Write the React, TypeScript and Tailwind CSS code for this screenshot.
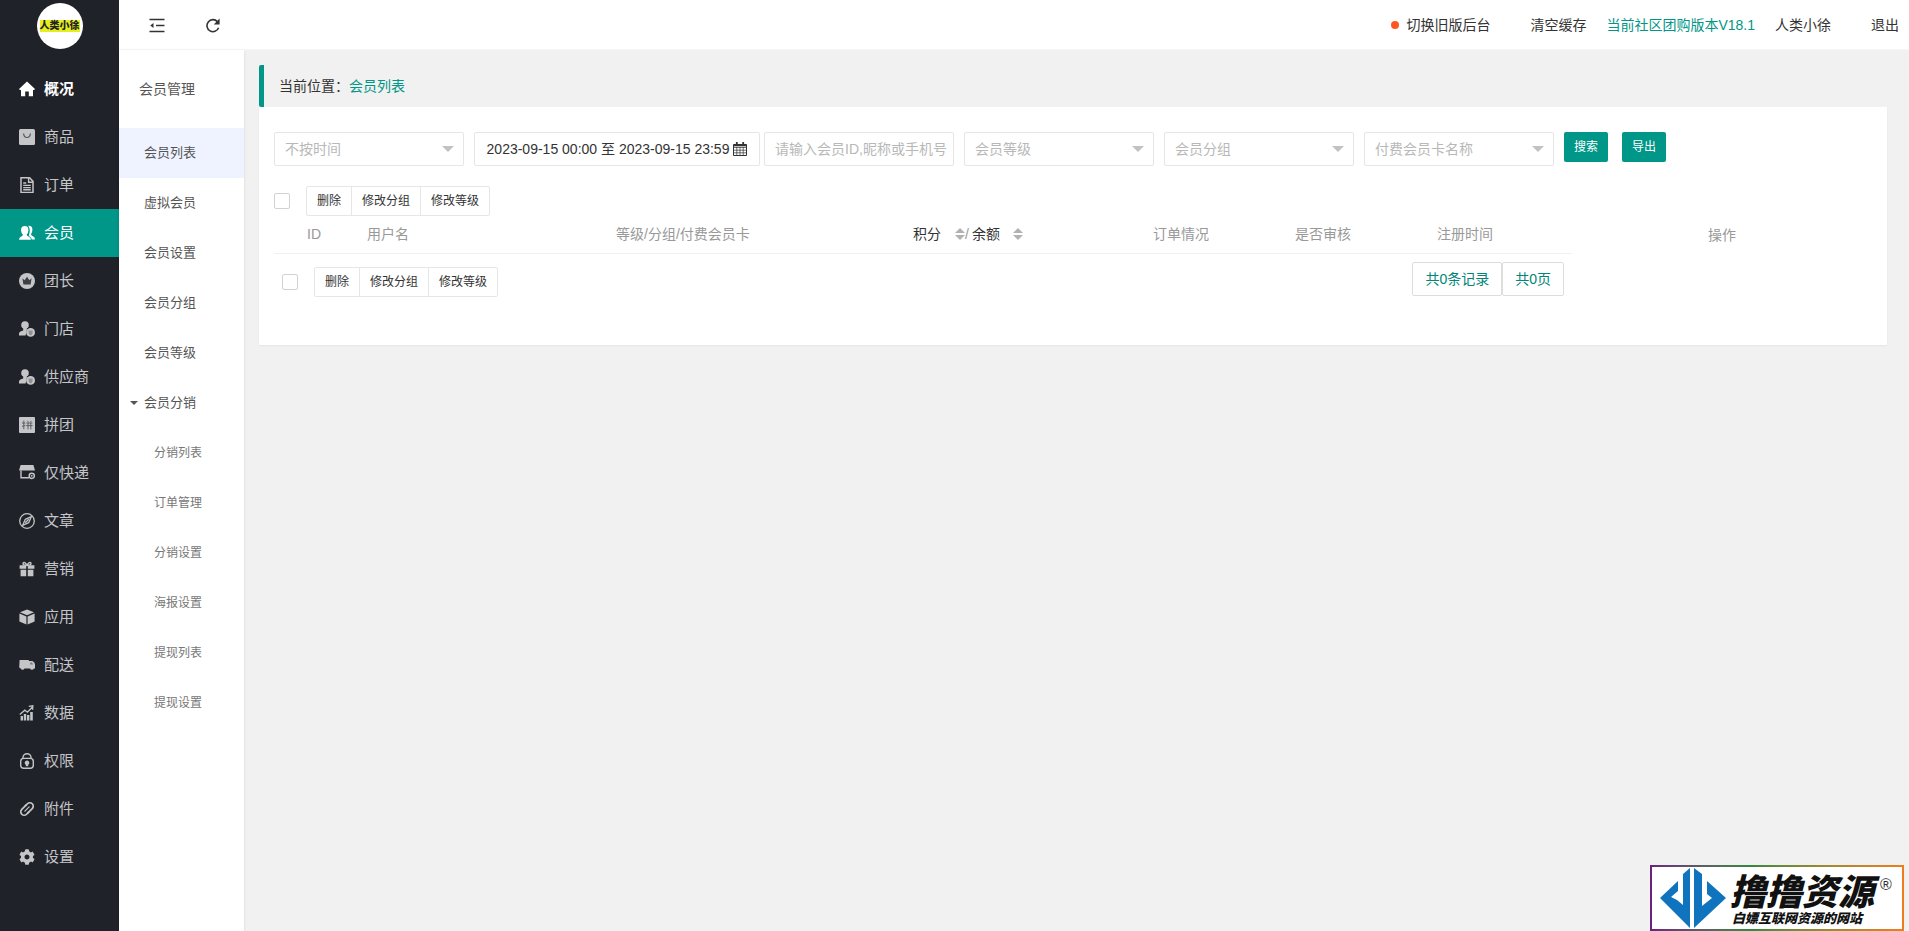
import type { ReactNode } from "react";
import { FaCog } from "react-icons/fa";

const FONT = "font-['Liberation_Sans','Noto_Sans_CJK_SC',sans-serif]";

function Icon({ children }: { children: ReactNode }) {
  return (
    <svg viewBox="0 0 16 16" className="size-4" fill="currentColor" aria-hidden="true">
      {children}
    </svg>
  );
}

const PersonBadge = () => (
  <Icon>
    <circle cx="6" cy="4" r="3.8" />
    <path d="M4.2 7h3.6v2.2L6.6 14.6H0V12.4Q.3 10.4 4.2 9.4z" />
    <circle cx="11.6" cy="11.4" r="4.4" />
    <path d="M9.6 9.4h4v2.6q-.2 1.6-2 2.4q-1.8-.8-2-2.4z" fill="#8f9194" />
  </Icon>
);

const NAV_ITEMS = [
  {
    label: "概况",
    icon: (
      <Icon>
        <path d="M8 .6L16 8l-.8 1H14v6.2H9.8v-4.6H6.2v4.6H2V9H.8L0 8z" />
      </Icon>
    ),
  },
  {
    label: "商品",
    icon: (
      <Icon>
        <rect width="16" height="16" rx="1.5" />
        <path d="M4.6 4.5q.3 4 3.4 4t3.4-4" fill="none" stroke="#55585d" strokeWidth="1.2" />
      </Icon>
    ),
  },
  {
    label: "订单",
    icon: (
      <Icon>
        <path d="M2 .8h8.6L14 4.4v11H2z" fill="none" stroke="currentColor" strokeWidth="1.5" />
        <path d="M9.6.8v4.4H14M4.2 6h3M4.2 8.4h7.6M4.2 10.6h7.6M4.2 12.8h7.6" fill="none" stroke="currentColor" strokeWidth="1.4" />
      </Icon>
    ),
  },
  {
    label: "会员",
    icon: (
      <Icon>
        <path d="M9.2.8Q13.6.6 13.4 5q-.2 2.6-1.4 4.2.2 1.4 2 2 2 .8 2 3.2h-3.2q-.4-2.4-2.8-3.4V9.6Q12 5 9.2.8z" />
        <path d="M5.8 1Q9.6 1 9.4 5.4 9.2 8 7.8 9.4q-.2 1.6 1.8 2.2 2.4 1 2.4 3.2H0q0-2.4 2.2-3.2 2-.6 1.6-2.2Q2.2 8 2 5.4 2 1 5.8 1z" />
      </Icon>
    ),
  },
  {
    label: "团长",
    icon: (
      <Icon>
        <circle cx="8" cy="8" r="8" />
        <path d="M3.4 5.2l2.2 2L8 3.8l2.4 3.4 2.2-2-1 6.4H4.4z" fill="#3c3f45" />
      </Icon>
    ),
  },
  { label: "门店", icon: <PersonBadge /> },
  { label: "供应商", icon: <PersonBadge /> },
  {
    label: "拼团",
    icon: (
      <Icon>
        <rect width="16" height="16" rx="1" />
        <path d="M3 6h3.4M3 9.4l3.4-1M4.8 3.6v8.6M7.4 6h6M7.2 8.6h6.4M9 6v6.4M11.8 6v6.4M8.6 3.8l.8 1.6M12.2 3.8l-.8 1.6" fill="none" stroke="#55585d" strokeWidth=".9" />
      </Icon>
    ),
  },
  {
    label: "仅快递",
    icon: (
      <Icon>
        <path d="M1.6 0h12.8L16 5.4H0z" />
        <path d="M2 5.4v7.4h8" fill="none" stroke="currentColor" strokeWidth="1.4" />
        <circle cx="12.8" cy="10.8" r="2.6" fill="#20222A" stroke="currentColor" strokeWidth="1.5" />
        <circle cx="12.8" cy="10.8" r=".9" />
      </Icon>
    ),
  },
  {
    label: "文章",
    icon: (
      <Icon>
        <g fill="none" stroke="currentColor">
          <circle cx="8" cy="8" r="7.3" strokeWidth="1.3" />
          <path d="M12.4 3.6L9.8 9.6 3.6 12.4 6.2 6.4zM6.2 9.8l3.6-3.6" strokeWidth="1.3" strokeLinejoin="round" />
        </g>
      </Icon>
    ),
  },
  {
    label: "营销",
    icon: (
      <Icon>
        <path d="M.6 4.2h6.6v3.6H.6zM8.8 4.2h6.6v3.6H8.8zM1.6 8.8h5.6v6.4H1.6zM8.8 8.8h5.6v6.4H8.8z" />
        <path d="M8 4.2Q3.6 4.4 4 2.2 5.4.2 8 4.2 10.6.2 12 2.2 12.4 4.4 8 4.2z" fill="none" stroke="currentColor" strokeWidth="1.4" />
      </Icon>
    ),
  },
  {
    label: "应用",
    icon: (
      <Icon>
        <path d="M8 .4l7 2.8L8 6.2 1 3.2zM.4 4.4L7.4 7.4v8.2L.4 12.4zM15.6 4.4L8.6 7.4v8.2l7-3.2z" />
      </Icon>
    ),
  },
  {
    label: "配送",
    icon: (
      <Icon>
        <path d="M.6 3h9.2v1h3.6Q16 5.4 16 7.4v4h-1.2a1.9 1.9 0 0 1-3.7 0H5.4a1.9 1.9 0 0 1-3.7 0L.2 10.6z" />
        <path d="M11.2 5.4h1.8l1.2 2h-3z" fill="#777a7f" />
      </Icon>
    ),
  },
  {
    label: "数据",
    icon: (
      <Icon>
        <path d="M1.6 11h2.4v4.6H1.6zM4.8 9h2.4v6.6H4.8zM8 10h2.4v5.6H8zM11.2 7h2.6v8.6h-2.6z" />
        <path d="M.8 9.4l5-4.2 2.6 2 4.8-5M9.8 1.4l4-.6-.2 4" fill="none" stroke="currentColor" strokeWidth="1.3" />
      </Icon>
    ),
  },
  {
    label: "权限",
    icon: (
      <Icon>
        <rect x="1.7" y="5.4" width="12.6" height="9.8" rx="3" fill="none" stroke="currentColor" strokeWidth="1.4" />
        <path d="M4 5.6V4.4a4 3.7 0 0 1 8 0v1.2" fill="none" stroke="currentColor" strokeWidth="1.4" />
        <path d="M8 7.6a2.2 2.2 0 0 1 1.2 4.1v1.5H6.8v-1.5A2.2 2.2 0 0 1 8 7.6z" />
      </Icon>
    ),
  },
  {
    label: "附件",
    icon: (
      <Icon>
        <g transform="rotate(-45 8 8)" fill="none" stroke="currentColor" strokeWidth="1.7" strokeLinecap="round">
          <path d="M10.5 4.6H4a3.4 3.4 0 0 0 0 6.8h3" />
          <path d="M5.5 11.4H12a3.4 3.4 0 0 0 0-6.8H9" />
          <path d="M5 8h6" strokeWidth="1.3" />
        </g>
      </Icon>
    ),
  },
  { label: "设置", icon: <FaCog className="size-4" /> },
];

const SUB_ITEMS = ["会员列表", "虚拟会员", "会员设置", "会员分组", "会员等级"];
const DIST_ITEMS = ["分销列表", "订单管理", "分销设置", "海报设置", "提现列表", "提现设置"];

function navClass(label: string) {
  if (label === "概况") return "font-bold text-white";
  if (label === "会员") return "bg-[#009688] text-white";
  return "text-[#c4c5c7] hover:text-white";
}

function FilterSelect({ label }: { label: string }) {
  return (
    <div className="relative w-[190px]">
      <select
        aria-label={label}
        className="h-[34px] w-full appearance-none rounded-xs border border-[#e6e6e6] bg-white px-2.5 text-sm text-[#b8b8b8] outline-none"
      >
        <option>{label}</option>
      </select>
      <span className="pointer-events-none absolute top-3.5 right-2.5 border-x-6 border-t-6 border-x-transparent border-t-[#c2c2c2]" />
    </div>
  );
}

function BulkActions({ name }: { name: string }) {
  return (
    <div className="flex items-center gap-4">
      <input
        type="checkbox"
        aria-label={name}
        className="size-4 appearance-none rounded-xs border border-[#d2d2d2] bg-white checked:bg-[#009688]"
      />
      <div className="flex rounded-xs border border-[#e6e6e6] text-xs text-[#333]">
        <button className="h-7 px-2.5">删除</button>
        <button className="h-7 border-l border-[#e6e6e6] px-2.5">修改分组</button>
        <button className="h-7 border-l border-[#e6e6e6] px-2.5">修改等级</button>
      </div>
    </div>
  );
}

function SortArrows() {
  return (
    <span className="flex flex-col gap-0.5">
      <span className="border-x-5 border-b-5 border-x-transparent border-b-[#b2b2b2]" />
      <span className="border-x-5 border-t-5 border-x-transparent border-t-[#b2b2b2]" />
    </span>
  );
}

export default function App() {
  return (
    <div className={`flex min-h-screen w-full bg-[#f1f1f1] text-sm text-[#333] ${FONT}`}>

      {/* main menu */}
      <aside className="flex w-[119px] shrink-0 flex-col bg-[#20222A]">
        <div className="flex h-[65px] justify-center pt-[3px]">
          <div className="flex size-[46px] items-center justify-center rounded-full bg-white">
            <span className="bg-[#e6ef1e] text-[10px] leading-3 font-black text-[#222]">人类小徐</span>
          </div>
        </div>
        <nav className="flex flex-col">
          {NAV_ITEMS.map(({ label, icon }) => (
            <a
              key={label}
              href="#"
              className={`flex h-12 items-center gap-[9px] pl-[19px] text-[15px] ${navClass(label)}`}
            >
              {icon}
              {label}
            </a>
          ))}
        </nav>
      </aside>

      <div className="flex min-w-0 flex-1 flex-col">

        {/* top bar */}
        <header className="flex h-[50px] items-center justify-between border-b border-[#f6f6f6] bg-white pr-2.5 pl-[30px]">
          <div className="flex items-center gap-10">
            <button aria-label="收起菜单">
              <svg viewBox="0 0 16 16" className="size-4" fill="none" stroke="#333" strokeWidth="1.5">
                <path d="M.5 2.5h15M7 8.5h8.5M.5 14.5h15" />
                <path d="M4.5 6v5L1.2 8.5z" fill="#333" stroke="none" />
              </svg>
            </button>
            <button aria-label="刷新">
              <svg viewBox="0 0 16 16" className="size-4" fill="none" stroke="#333" strokeWidth="1.6">
                <path d="M13.6 10.8A6 6 0 1 1 12.4 4.6" />
                <path d="M14.6 1.4v6H8.8z" fill="#333" stroke="none" />
              </svg>
            </button>
          </div>
          <div className="flex items-center">
            <a href="#" className="flex items-center gap-[7px]">
              <span className="size-2 rounded-full bg-[#ff5722]" />
              切换旧版后台
            </a>
            <a href="#" className="ml-10">清空缓存</a>
            <span className="ml-5 text-[#009688]">当前社区团购版本V18.1</span>
            <a href="#" className="ml-5">人类小徐</a>
            <a href="#" className="ml-10">退出</a>
          </div>
        </header>

        <div className="flex flex-1">

          {/* sub menu */}
          <aside className="w-[125px] shrink-0 bg-white text-[13px] text-[#555] shadow-sm">
            <h2 className="flex h-[78px] items-center pl-5 text-sm">会员管理</h2>
            <nav className="flex flex-col">
              {SUB_ITEMS.map((label, i) => (
                <a
                  key={label}
                  href="#"
                  className={`flex h-[50px] items-center pl-[25px] ${i === 0 ? "bg-[#eef3ff]" : ""}`}
                >
                  {label}
                </a>
              ))}
              <button className="flex h-[50px] items-center gap-1.5 pl-[11px]">
                <span className="border-x-4 border-t-4 border-x-transparent border-t-[#555]" />
                会员分销
              </button>
              {DIST_ITEMS.map(label => (
                <a key={label} href="#" className="flex h-[50px] items-center pl-[35px] text-xs text-[#777]">
                  {label}
                </a>
              ))}
            </nav>
          </aside>

          {/* content */}
          <main className="min-w-0 flex-1 pt-[15px] pr-[22px] pl-[15px]">
            <div className="flex h-[42px] items-center rounded-l-xs border-l-5 border-[#009688] pl-[15px]">
              当前位置：<a href="#" className="text-[#009688]">会员列表</a>
            </div>

            <div className="bg-white px-[15px] pt-[25px] pb-12 shadow-xs">
              <form className="flex items-start" onSubmit={e => e.preventDefault()}>
                <FilterSelect label="不按时间" />
                <button
                  type="button"
                  className="ml-2.5 flex h-[34px] w-[286px] items-center justify-center gap-1 rounded-xs border border-[#e6e6e6] whitespace-nowrap"
                >
                  2023-09-15 00:00 至 2023-09-15 23:59
                  <svg viewBox="0 0 14 14" className="size-3.5" fill="none" stroke="#333">
                    <path d="M.5 2.5h13v11H.5z" />
                    <path d="M.5 5.5h13M.5 8.2h13M.5 10.8h13M3.8 5v8.5M7 5v8.5M10.2 5v8.5" strokeWidth=".7" />
                    <path d="M.5 3.5h13" strokeWidth="1.6" />
                    <path d="M3.8 0v3.5M10.2 0v3.5" strokeWidth="1.8" />
                  </svg>
                </button>
                <input
                  aria-label="会员关键字"
                  placeholder="请输入会员ID,昵称或手机号"
                  className="ml-1 h-[34px] w-[190px] rounded-xs border border-[#e6e6e6] pl-2.5 outline-none placeholder:text-[#b8b8b8]"
                />
                <div className="ml-2.5 flex gap-2.5">
                  <FilterSelect label="会员等级" />
                  <FilterSelect label="会员分组" />
                  <FilterSelect label="付费会员卡名称" />
                </div>
                <button className="ml-2.5 h-[30px] w-11 rounded-xs bg-[#009688] text-xs text-white">搜索</button>
                <button className="ml-3.5 h-[30px] w-11 rounded-xs bg-[#009688] text-xs text-white">导出</button>
              </form>

              <div className="mt-5">
                <BulkActions name="全选" />
              </div>

              <table className="w-full table-fixed">
                <thead>
                  <tr className="h-[37px] text-left text-[#999] *:font-normal">
                    <th className="w-[33px] border-b border-[#f0f0f0]" />
                    <th className="w-[60px] border-b border-[#f0f0f0]">ID</th>
                    <th className="w-[249px] border-b border-[#f0f0f0]">用户名</th>
                    <th className="w-[297px] border-b border-[#f0f0f0]">等级/分组/付费会员卡</th>
                    <th className="w-[240px] border-b border-[#f0f0f0]">
                      <div className="flex items-center">
                        <a href="#" className="flex items-center gap-3.5 text-[#333]">积分<SortArrows /></a>
                        /
                        <a href="#" className="ml-[3px] flex items-center gap-[13px] text-[#333]">余额<SortArrows /></a>
                      </div>
                    </th>
                    <th className="w-[142px] border-b border-[#f0f0f0]">订单情况</th>
                    <th className="w-[142px] border-b border-[#f0f0f0]">是否审核</th>
                    <th className="w-[135px] border-b border-[#f0f0f0]">注册时间</th>
                    <th className="text-center">操作</th>
                  </tr>
                </thead>
                <tbody>
                  <tr>
                    <td colSpan={8} className="px-2 pt-2">
                      <div className="flex items-start justify-between">
                        <div className="pt-[5px]">
                          <BulkActions name="全选本页" />
                        </div>
                        <div className="flex text-[#008577]">
                          <span className="flex h-[34px] items-center rounded-xs border border-[#ddd] px-3">共0条记录</span>
                          <span className="flex h-[34px] items-center rounded-xs border border-[#ddd] px-3">共0页</span>
                        </div>
                      </div>
                    </td>
                    <td />
                  </tr>
                </tbody>
              </table>
            </div>
          </main>
        </div>
      </div>

      {/* site badge */}
      <div className="fixed right-[5px] bottom-0 bg-linear-to-r from-[#6b1f7c] via-[#2f8a3c] via-40% to-[#f07c1c] p-0.5">
        <div className="flex h-[62px] w-[250px] items-center bg-white pl-2">
          <svg viewBox="0 0 66 62" className="h-[62px] w-[66px] shrink-0" fill="#0f74bd">
            <path d="M0 31L18 14v10l-7 6 6 3 6 5V7l7-6v60z" />
            <path d="M34 1l8 6v32l10-8-5-4V14l19 17-32 30z" />
          </svg>
          <div className="ml-1 flex shrink-0 flex-col pt-1.5 font-black text-[#111] italic">
            <span className="text-4xl leading-9">撸撸资源</span>
            <span className="pl-0.5 text-[13px] leading-4">白嫖互联网资源的网站</span>
          </div>
          <span className="ml-1.5 self-start pt-1.5 text-base">®</span>
        </div>
      </div>
    </div>
  );
}
